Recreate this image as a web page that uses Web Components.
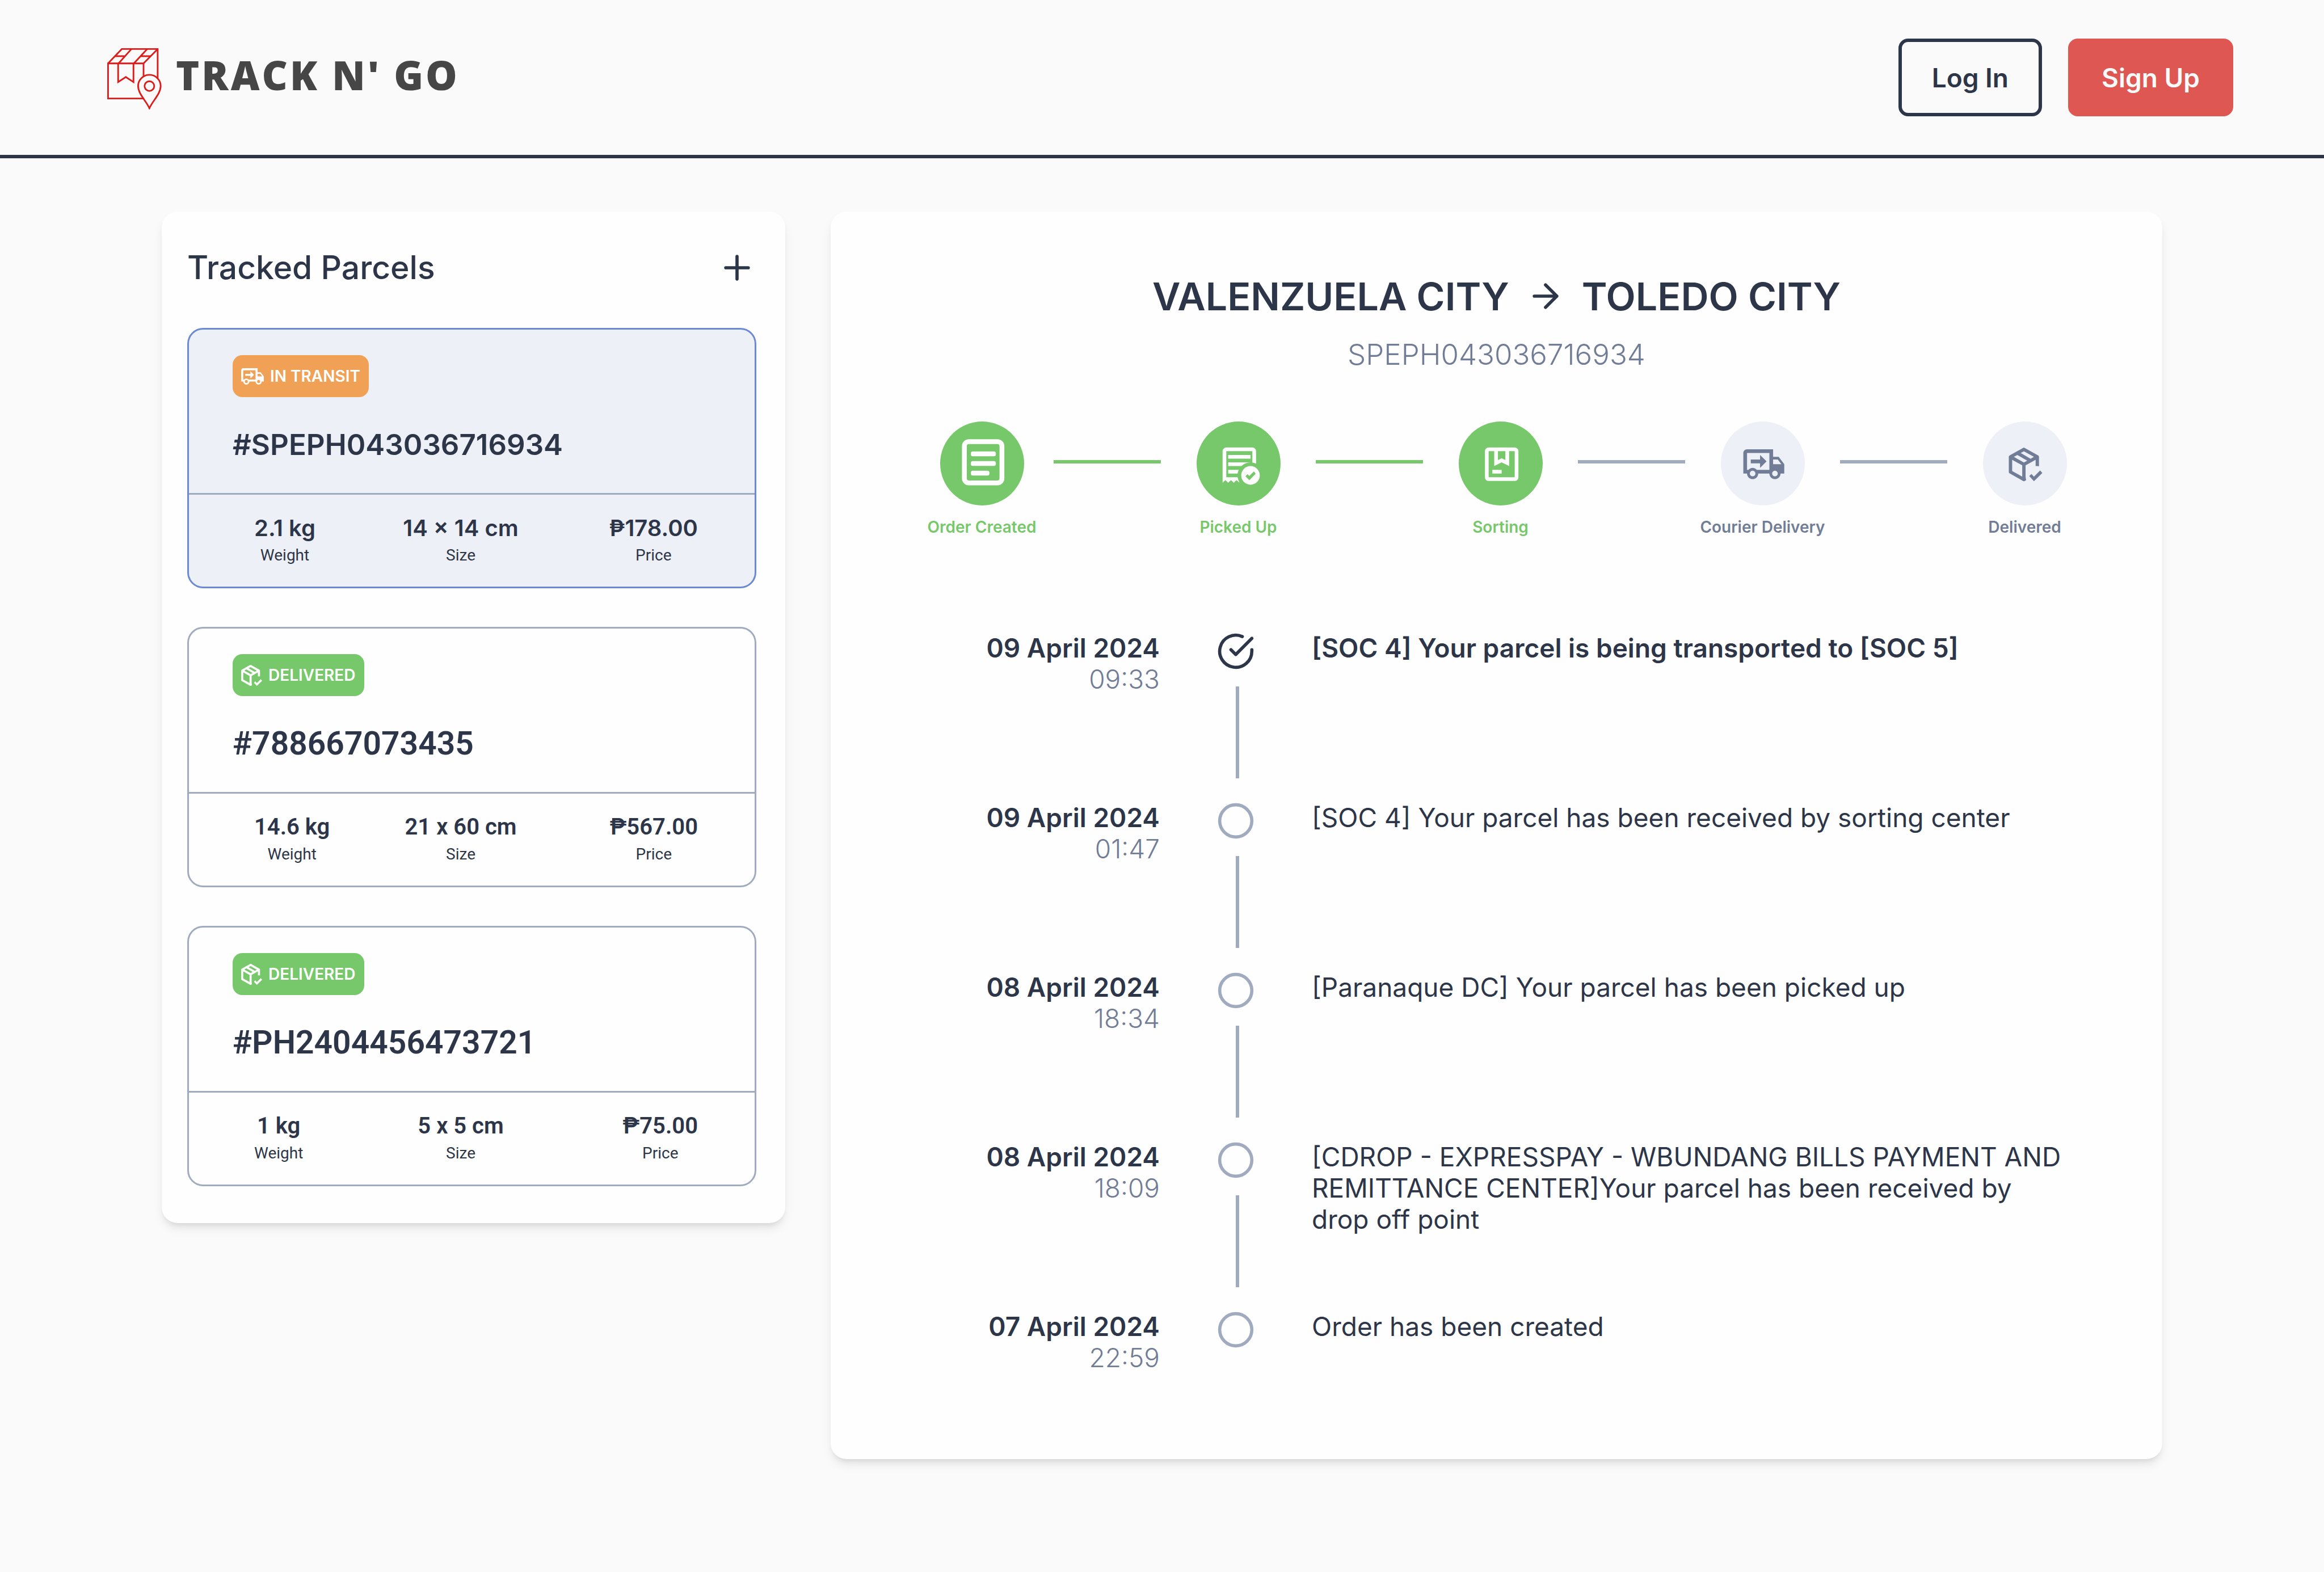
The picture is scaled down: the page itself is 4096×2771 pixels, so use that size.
<!DOCTYPE html>
<html lang="en">
<head>
<meta charset="utf-8">
<title>Track N' Go</title>
<style>
  :root {
    --ink: #2d3648;
    --muted: #717d96;
    --line: #a0abc0;
    --tint: #edf0f7;
    --page: #fafafa;
    --card: #fefefe;
    --green: #77c86a;
    --orange: #f0a156;
    --red: #de5753;
    --blue: #6b8ad3;
    --shadow: 0 11px 17px -3px rgba(0, 0, 0, .1), 0 6px 11px -6px rgba(0, 0, 0, .1);
  }
  body {
    margin: 0;
    background: var(--page);
    color: var(--ink);
    font-family: Inter, "Liberation Sans", sans-serif;
  }
  main {
    display: flex;
    align-items: flex-start;
    gap: 80px;
    padding: 94px 285px;
  }
  parcel-list { flex: 0 0 1099px; }
  parcel-detail { flex: 1; min-width: 0; }
</style>
</head>
<body>

<site-header>
  <site-logo slot="brand">TRACK N' GO</site-logo>
  <action-button slot="actions" kind="outline">Log In</action-button>
  <action-button slot="actions" kind="solid">Sign Up</action-button>
</site-header>

<main>
  <parcel-list>
    <span slot="title">Tracked Parcels</span>
    <parcel-card selected status="transit">
      <span slot="status">IN TRANSIT</span>
      <span slot="number">#SPEPH043036716934</span>
      <span slot="weight">2.1 kg</span>
      <span slot="size">14 × 14 cm</span>
      <span slot="price">₱178.00</span>
    </parcel-card>
    <parcel-card status="delivered">
      <span slot="status">DELIVERED</span>
      <span slot="number">#788667073435</span>
      <span slot="weight">14.6 kg</span>
      <span slot="size">21 x 60 cm</span>
      <span slot="price">₱567.00</span>
    </parcel-card>
    <parcel-card status="delivered">
      <span slot="status">DELIVERED</span>
      <span slot="number">#PH2404456473721</span>
      <span slot="weight">1 kg</span>
      <span slot="size">5 x 5 cm</span>
      <span slot="price">₱75.00</span>
    </parcel-card>
  </parcel-list>

  <parcel-detail>
    <span slot="from">VALENZUELA CITY</span>
    <span slot="to">TOLEDO CITY</span>
    <span slot="number">SPEPH043036716934</span>

    <progress-step slot="steps" icon="order" done first>Order Created</progress-step>
    <progress-step slot="steps" icon="picked" done>Picked Up</progress-step>
    <progress-step slot="steps" icon="sorting" done>Sorting</progress-step>
    <progress-step slot="steps" icon="truck">Courier Delivery</progress-step>
    <progress-step slot="steps" icon="package">Delivered</progress-step>

    <timeline-entry current date="09 April 2024" time="09:33">[SOC 4] Your parcel is being transported to [SOC 5]</timeline-entry>
    <timeline-entry date="09 April 2024" time="01:47">[SOC 4] Your parcel has been received by sorting center</timeline-entry>
    <timeline-entry date="08 April 2024" time="18:34">[Paranaque DC] Your parcel has been picked up</timeline-entry>
    <timeline-entry date="08 April 2024" time="18:09">[CDROP - EXPRESSPAY - WBUNDANG BILLS PAYMENT AND REMITTANCE CENTER]Your parcel has been received by drop off point</timeline-entry>
    <timeline-entry last date="07 April 2024" time="22:59">Order has been created</timeline-entry>
  </parcel-detail>
</main>

<script>
  const TRUCK = `<path d="M18 18.5c.83 0 1.5-.67 1.5-1.5s-.67-1.5-1.5-1.5-1.5.67-1.5 1.5.67 1.5 1.5 1.5m1.5-9H17V12h4.46L19.5 9.5M6 18.5c.83 0 1.5-.67 1.5-1.5s-.67-1.5-1.5-1.5-1.5.67-1.5 1.5.67 1.5 1.5 1.5M20 8l3 4v5h-2c0 1.66-1.34 3-3 3s-3-1.34-3-3H9c0 1.66-1.34 3-3 3s-3-1.34-3-3H1V6c0-1.11.89-2 2-2h14v4h3M3 6v9h.76c.55-.61 1.35-1 2.24-1s1.69.39 2.24 1H15V6H3m7 1 3.5 3.5L10 14v-2.5H5v-2h5V7z"/>`;
  const PACKAGE = `<path fill-rule="evenodd" d="M21 13.1V7.5c0-.38-.21-.71-.53-.88l-7.9-4.44C12.41 2.06 12.21 2 12 2s-.41.06-.57.18l-7.9 4.44c-.32.17-.53.5-.53.88v9c0 .38.21.71.53.88l7.9 4.44c.16.12.36.18.57.18s.41-.06.57-.18l.8-.45C13.1 20.6 13 19.8 13 19v-6.42l6-3.37V13c.7 0 1.36.03 2 .1zM12 4.15 10.11 5.22 16 8.61l1.96-1.11L12 4.15zM6.04 7.5 12 10.85l1.96-1.1-5.88-3.4L6.04 7.5zM5 15.91l6 3.38v-6.71L5 9.21v6.7z"/><path d="M18 22l-2.8-3 1.3-1.3 1.5 1.6 3.7-3.7 1.3 1.5z"/>`;

  const STEP_ICONS = {
    order: `<rect x="60" y="50" width="93" height="102" rx="11" fill="none" stroke="currentColor" stroke-width="12"/>
      <rect x="76" y="74" width="62" height="12" rx="5"/><rect x="76" y="98" width="62" height="12" rx="5"/><rect x="76" y="122" width="46" height="12" rx="5"/>`,
    picked: `<mask id="cut"><rect width="24" height="24" fill="#fff"/><circle cx="18" cy="18" r="7" fill="#000"/></mask>
      <g transform="translate(50.5 50.5) scale(4.61)">
        <path mask="url(#cut)" fill-rule="evenodd" d="M3 22V5a2 2 0 0 1 2-2h14a2 2 0 0 1 2 2v15h-9v2l-1.500-1.500L9 22l-1.500-1.500L6 22l-1.500-1.500zM5 5v14h14V5zM6 7h12v2H6zM6 11h12v2H6zM6 15h12v2H6z"/>
        <path fill-rule="evenodd" d="M18 13a5 5 0 1 1 0 10 5 5 0 0 1 0-10zM15.300 18.500l2.050 2.100 3.450-3.500-.95-1.200-2.500 2.450-.95-1z"/>
      </g>`,
    sorting: `<g transform="translate(51 50.5) scale(4.61)">
        <path fill-rule="evenodd" d="M5 3h14a2 2 0 0 1 2 2v14a2 2 0 0 1-2 2H5a2 2 0 0 1-2-2V5a2 2 0 0 1 2-2zM5 5v14h14V5z"/>
        <path d="M8 4v9l4-2 4 2V4h-2v5.800l-2-1-2 1V4zM7 15h5v2H7z"/>
      </g>`,
    truck: `<g transform="translate(51 50.5) scale(4.61)">${TRUCK}</g>`,
    package: `<g transform="translate(51.5 56.5) scale(4.15)">${PACKAGE}</g>`
  };

  const define = (name, render) => customElements.define(name, class extends HTMLElement {
    constructor() {
      super();
      this.attachShadow({ mode: "open" });
    }
    connectedCallback() {
      this.shadowRoot.innerHTML = render(this);
    }
  });

  define("site-header", () => `
    <style>
      :host { display: block; border-bottom: 6px solid var(--ink); }
      header { display: flex; align-items: center; justify-content: space-between; padding: 68px 160px 68px 189px; }
      nav { display: flex; gap: 46px; }
    </style>
    <header><slot name="brand"></slot><nav><slot name="actions"></slot></nav></header>`);

  define("site-logo", () => `
    <style>
      :host { display: block; }
      a { display: flex; align-items: center; gap: 25px; padding-top: 4px; color: #464646; text-decoration: none;
          font: 800 70px/84px "Open Sans", "Noto Sans", sans-serif; letter-spacing: 4px; }
      svg { width: 96px; height: 108px; }
      span { padding-bottom: 14px; }
    </style>
    <a href="#">
      <svg viewBox="0 0 135 152" fill="none" stroke="#dc1c1a" stroke-width="4" aria-hidden="true">
        <path d="M91 124.700H2V37.700H90V70M2 37.700 36 2H125V76M90 37.700 125 2"/>
        <path d="M27 37.700V84L46 71.500 65 84V37.700M28 37.700 60 2M66 37.700 99 2M20 19.700H43M82 19.700H108"/>
        <path d="M104.500 149C97 131 77 114 76.500 94a28 28 0 0 1 56 0C132 114 112 131 104.500 149z"/>
        <circle cx="104.500" cy="94" r="12"/>
      </svg>
      <span><slot></slot></span>
    </a>`);

  define("action-button", () => `
    <style>
      :host { display: block; }
      button { display: block; box-sizing: border-box; height: 137px; padding: 0 53px; border: 6px solid var(--ink); border-radius: 17px;
               background: transparent; color: var(--ink); font: 600 46px/56px Inter, sans-serif; cursor: pointer; }
      :host([kind="solid"]) button { background: var(--red); border-color: var(--red); color: var(--page); }
    </style>
    <button type="button"><slot></slot></button>`);

  define("parcel-list", () => `
    <style>
      :host { display: block; box-sizing: border-box; padding: 65px 51px 65px 45px; background: var(--card); border-radius: 28px; box-shadow: var(--shadow); }
      header { display: flex; align-items: center; justify-content: space-between; margin-bottom: 72px; }
      h2 { margin: 0; font-size: 57px; line-height: 68px; font-weight: 500; }
      button { display: block; padding: 0; border: 0; background: none; color: inherit; cursor: pointer; }
      svg { display: block; width: 68px; height: 68px; }
      .cards { display: flex; flex-direction: column; gap: 68px; }
    </style>
    <header>
      <h2><slot name="title"></slot></h2>
      <button type="button" aria-label="Add parcel">
        <svg viewBox="0 0 24 24" fill="none" stroke="currentColor" stroke-width="2" stroke-linecap="round"><path d="M12 5v14M5 12h14"/></svg>
      </button>
    </header>
    <div class="cards"><slot></slot></div>`);

  define("parcel-card", el => {
    const transit = el.getAttribute("status") === "transit";
    return `
    <style>
      :host { display: block; border: 3px solid var(--line); border-radius: 28px; --face: Roboto, sans-serif; --number: 57px; }
      :host([selected]) { border-color: var(--blue); background: var(--tint); --face: Inter, sans-serif; --number: 51px; }
      .head { padding: 45px 77px 54px; border-bottom: 3px solid var(--line); }
      .badge { display: flex; width: fit-content; align-items: center; gap: 11px; box-sizing: border-box; height: 74px; padding: 0 15px;
               border-radius: 17px; background: var(--green); color: #fff; font-size: 28px; line-height: 34px; font-weight: 600; }
      :host([status="transit"]) .badge { background: var(--orange); }
      .badge svg { display: block; width: 37px; height: 37px; }
      :host([status="transit"]) .badge svg { width: 40px; height: 29px; }
      h3 { margin: 53px 0 0; font-family: var(--face); font-size: var(--number); line-height: 62px; font-weight: 600; }
      dl { display: grid; grid-template-columns: 242fr 245fr 296fr; margin: 0; padding: 35px 100px 38px 115px; text-align: center; }
      dl div { display: flex; flex-direction: column-reverse; gap: 7px; justify-self: center; }
      dl div:first-child { justify-self: start; }
      dl div:last-child { justify-self: end; }
      dd { margin: 0; font-family: var(--face); font-size: 40px; line-height: 48px; font-weight: 600; }
      dt { font-family: Roboto, sans-serif; font-size: 28px; line-height: 34px; }
    </style>
    <article>
      <div class="head">
        <div class="badge">
          <svg viewBox="${transit ? "1 4 22 16" : "3 2 20 20"}" fill="currentColor" aria-hidden="true">${transit ? TRUCK : PACKAGE}</svg>
          <slot name="status"></slot>
        </div>
        <h3><slot name="number"></slot></h3>
      </div>
      <dl>
        <div><dt>Weight</dt><dd><slot name="weight"></slot></dd></div>
        <div><dt>Size</dt><dd><slot name="size"></slot></dd></div>
        <div><dt>Price</dt><dd><slot name="price"></slot></dd></div>
      </dl>
    </article>`;
  });

  define("parcel-detail", () => `
    <style>
      :host { display: block; box-sizing: border-box; padding: 108px 0 151px; background: var(--card); border-radius: 28px; box-shadow: var(--shadow); }
      h1 { display: flex; justify-content: center; align-items: center; gap: 30px; margin: 0; font-size: 68px; line-height: 82px; font-weight: 600; }
      h1 svg { width: 68px; height: 68px; }
      p { margin: 31px 0 0; text-align: center; color: var(--muted); font-size: 51px; line-height: 62px; font-weight: 300; }
      .steps { display: flex; align-items: flex-start; margin-top: 87px; padding: 0 106px 0 140px; }
      .timeline { margin-top: 168px; padding-right: 174px; }
    </style>
    <h1>
      <slot name="from"></slot>
      <svg viewBox="0 0 24 24" fill="none" stroke="currentColor" stroke-width="2" stroke-linecap="round" stroke-linejoin="round" aria-label="to"><path d="M5 12h14M12 5l7 7-7 7"/></svg>
      <slot name="to"></slot>
    </h1>
    <p><slot name="number"></slot></p>
    <div class="steps"><slot name="steps"></slot></div>
    <div class="timeline"><slot></slot></div>`);

  define("progress-step", el => `
    <style>
      :host { display: flex; flex: 462; align-items: flex-start; color: var(--muted); --disc: var(--tint); --mark: var(--muted); --rule: var(--line); }
      :host([first]) { flex: 253; }
      :host([done]) { color: var(--green); --disc: var(--green); --mark: #fefefe; --rule: var(--green); }
      .rule { flex: 189; height: 6px; margin-top: 68px; background: var(--rule); }
      .step { flex: 273; display: flex; flex-direction: column; align-items: center; gap: 21px; min-width: 0;
              font-size: 28px; line-height: 34px; font-weight: 600; white-space: nowrap; }
      .disc { width: 148px; height: 148px; border-radius: 50%; background: var(--disc); color: var(--mark); }
      svg { display: block; width: 148px; height: 148px; }
    </style>
    ${el.hasAttribute("first") ? "" : `<div class="rule"></div>`}
    <div class="step">
      <div class="disc"><svg viewBox="0 0 208 208" fill="currentColor" aria-hidden="true">${STEP_ICONS[el.getAttribute("icon")]}</svg></div>
      <span><slot></slot></span>
    </div>`);

  define("timeline-entry", el => `
    <style>
      :host { display: grid; grid-template-columns: 580px 68px 1fr; column-gap: 100px; font-size: 46px; line-height: 55px; }
      .when { padding-top: 1px; text-align: right; }
      b { display: block; font-weight: 600; }
      time { display: block; color: var(--muted); font-weight: 300; }
      .what { padding-top: 1px; font-weight: 400; }
      :host([current]) .what { font-weight: 600; }
      .mark { color: var(--line); }
      :host([current]) svg { color: var(--ink); }
      svg { display: block; width: 68px; height: 68px; }
      .rule { width: 6px; height: 162px; margin: 28px 0 41px 50%; background: var(--line); }
      :host([last]) .rule { display: none; }
    </style>
    <div class="when"><b>${el.getAttribute("date")}</b><time>${el.getAttribute("time")}</time></div>
    <div class="mark">
      <svg viewBox="0 0 24 24" fill="none" stroke="currentColor" stroke-width="2" stroke-linecap="round" stroke-linejoin="round" aria-hidden="true">
        ${el.hasAttribute("current")
          ? `<path d="M22 11.080V12a10 10 0 1 1-5.930-9.140M22 4 12 14.010l-3-3"/>`
          : `<circle cx="12" cy="12" r="10"/>`}
      </svg>
      <div class="rule"></div>
    </div>
    <div class="what"><slot></slot></div>`);
</script>
</body>
</html>
